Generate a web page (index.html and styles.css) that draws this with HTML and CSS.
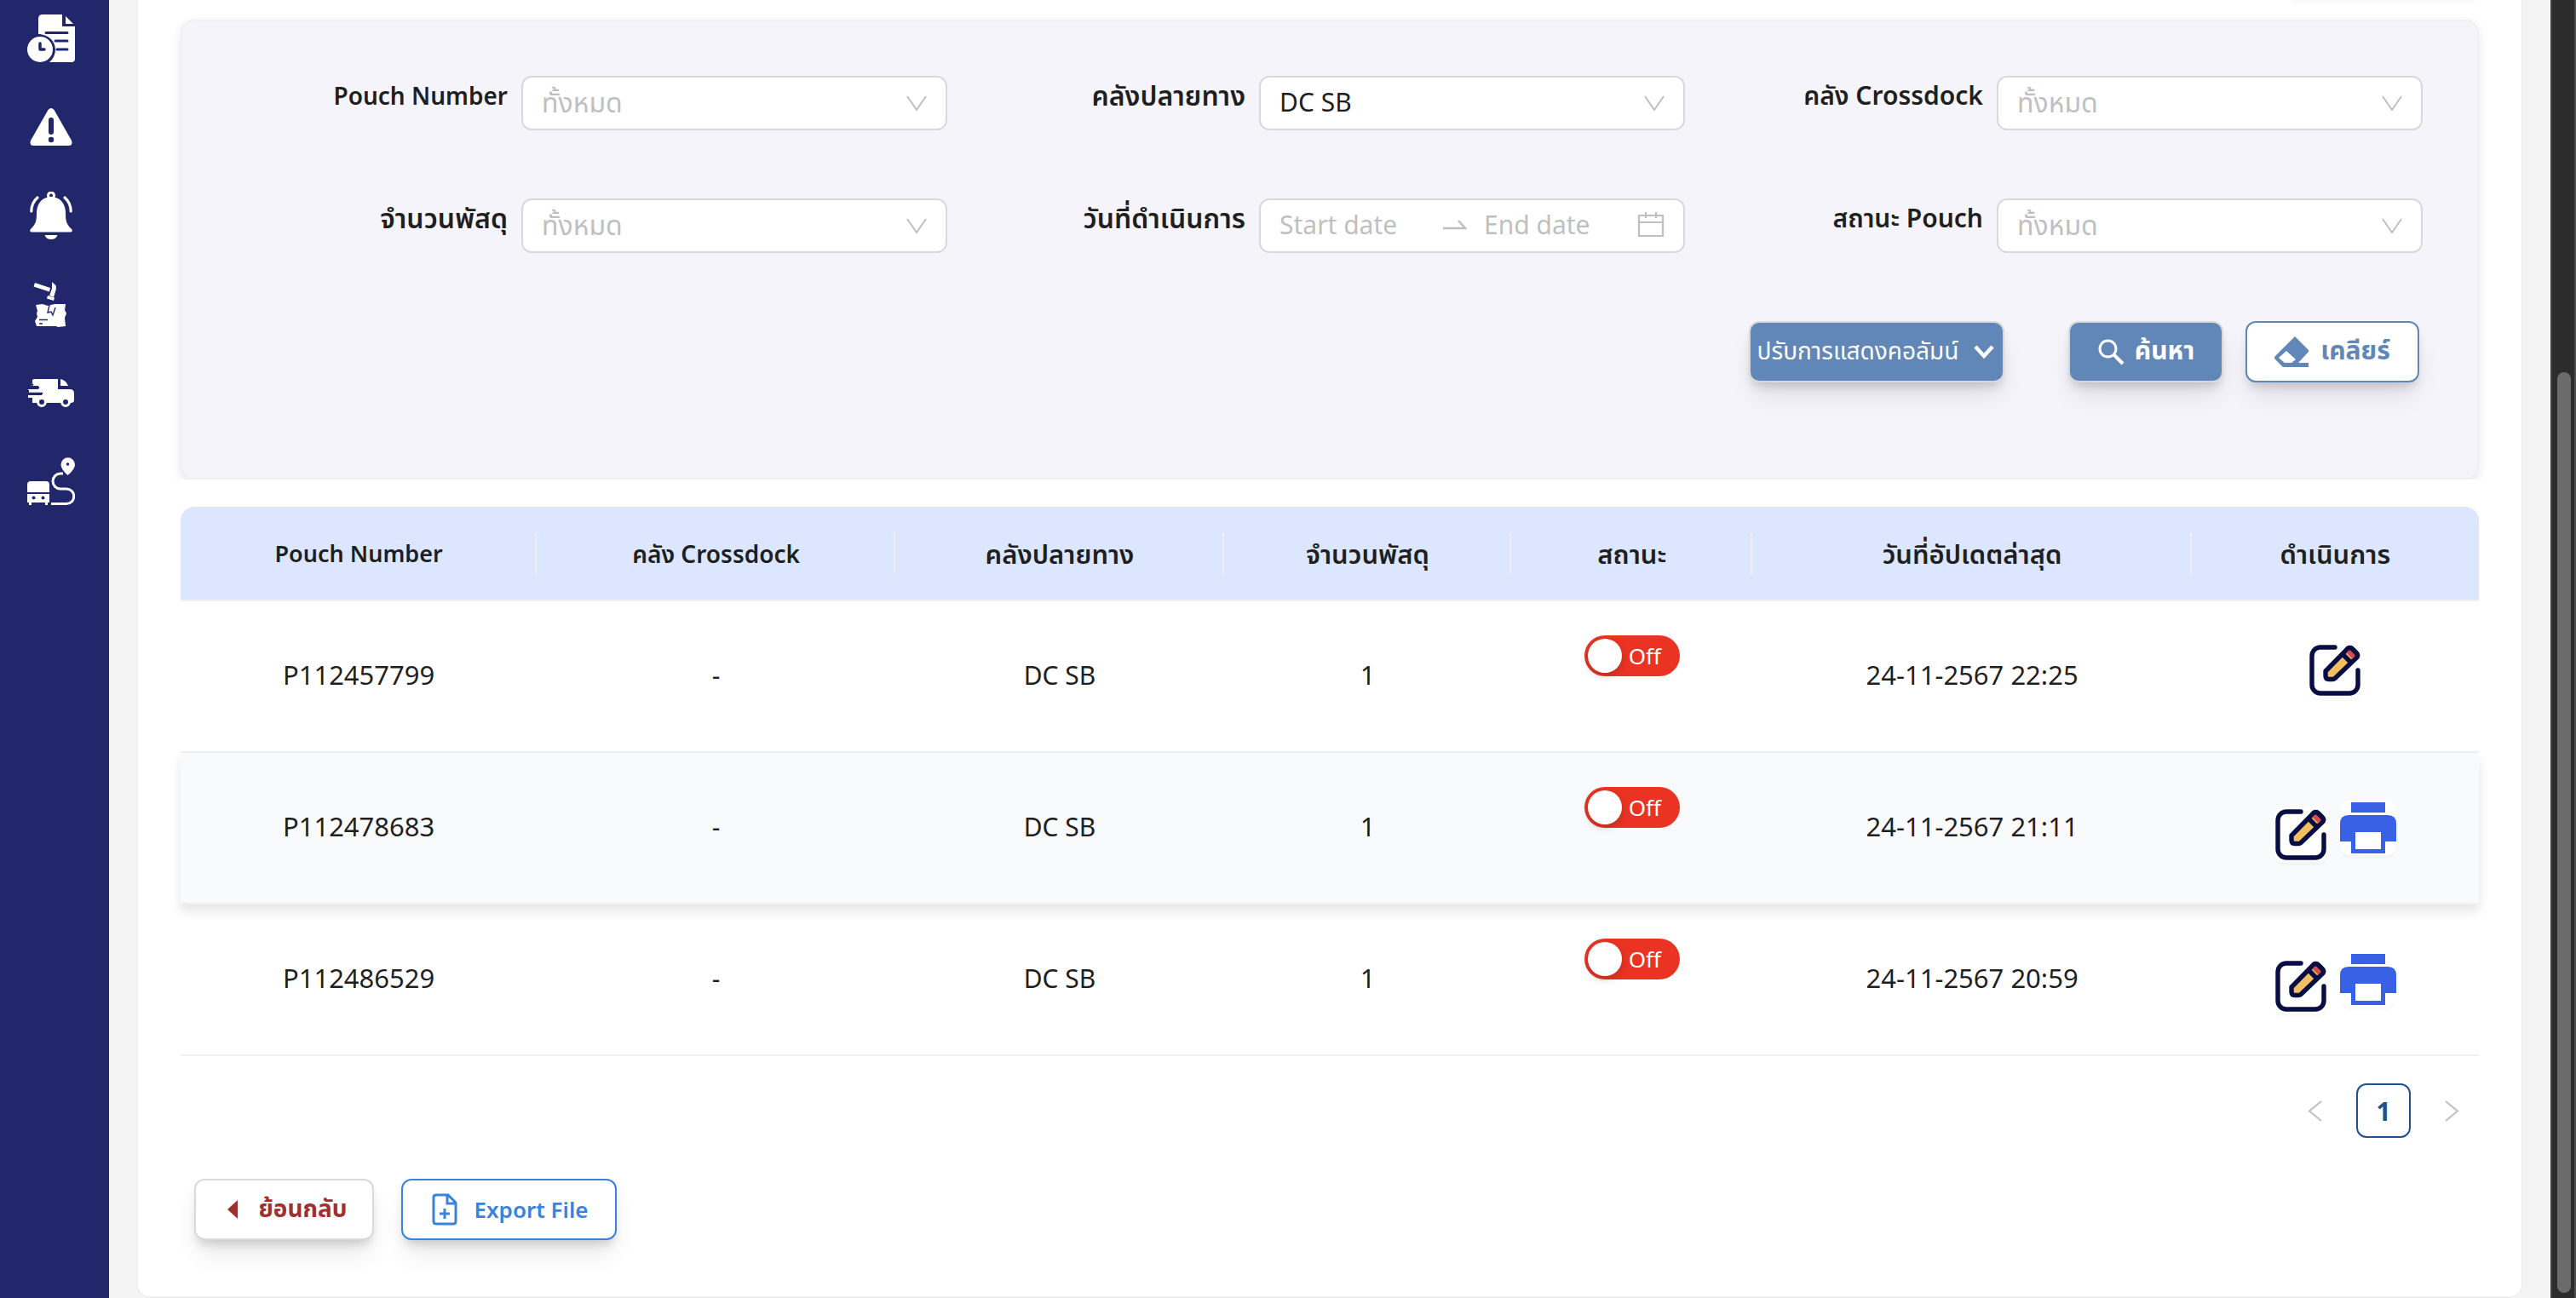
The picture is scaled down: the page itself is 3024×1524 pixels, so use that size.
FILE: index.html
```html
<!DOCTYPE html>
<html lang="th">
<head>
<meta charset="utf-8">
<title>Pouch</title>
<meta name="viewport" content="width=device-width, initial-scale=1">
<link rel="stylesheet" href="styles.css">
</head>
<body>
<svg class="sprite" aria-hidden="true">
  <symbol id="i-chevron" viewBox="0 0 28 28"><path d="M3 6L14 22L25 6" fill="none" stroke="currentColor" stroke-width="2"/></symbol>
  <symbol id="i-edit" viewBox="0 0 60 60">
    <path d="M30 3H13A10 10 0 0 0 3 13V47A10 10 0 0 0 13 57H47A10 10 0 0 0 57 47V30" fill="none" stroke="#080d43" stroke-width="5.4" stroke-linecap="round"/>
    <path d="M19 31L44.500 5Q47.500 2 50.500 5L55 9.500Q58 12.500 55 15.500L30 39.500Q29 40.500 27 40.500H23Q19 40.500 19 36.500Z" fill="#f1bf5f" stroke="#080d43" stroke-width="5.400" stroke-linejoin="round"/>
    <path d="M43.500 9.500L47.500 5.500L54.500 12.500L50.500 16.500Z" fill="#d84a4f"/>
    <path d="M39 11L49 21" stroke="#080d43" stroke-width="5.400"/>
    <path d="M44.500 5Q47.500 2 50.500 5L55 9.500Q58 12.500 55 15.500" fill="none" stroke="#080d43" stroke-width="5.400"/>
  </symbol>
  <symbol id="i-print" viewBox="0 0 66 64">
    <path d="M13 2H53V14H13ZM10 17H56Q66 17 66 27V48H53V62H13V48H0V27Q0 17 10 17Z" fill="#3861e6"/>
    <path d="M18 37H48V57H18Z" fill="#fff"/>
  </symbol>
</svg>
<div class="app">
  <nav class="sidebar" aria-label="Menu">
    <a class="nav-link" href="#history" aria-label="History"><svg viewBox="0 0 56 56">
      <path d="M18 0H41V14H56V52Q56 56 52 56H26Q33 50 33 41Q32 26 15 23H13V5Q13 0 18 0Z" fill="#fff"/>
      <path d="M45 2L54 11H45Z" fill="#fff"/>
      <path d="M22 21.500H47M33 31H47M35 41H47" stroke="#22276b" stroke-width="3" stroke-linecap="round"/>
      <circle cx="15" cy="41" r="15" fill="#fff"/><path d="M15 34V41H20" fill="none" stroke="#22276b" stroke-width="3.500" stroke-linecap="round" stroke-linejoin="round"/></svg></a>
    <a class="nav-link" href="#problems" aria-label="Problems"><svg viewBox="0 0 56 56">
      <path d="M24.500 8Q28 4 31.500 8L52 44Q54 49.500 49 50H7Q2 49.500 4 44Z" fill="#fff"/>
      <path d="M28 20V34" stroke="#22276b" stroke-width="6" stroke-linecap="round"/><circle cx="28" cy="43" r="3.200" fill="#22276b"/></svg></a>
    <a class="nav-link" href="#alerts" aria-label="Alerts"><svg viewBox="0 0 56 56">
      <circle cx="28" cy="4.500" r="3.500" fill="none" stroke="#fff" stroke-width="3"/>
      <path d="M28 6Q43 7 45 23C45 33 45 37 52 44Q54 47 51 47.500H5Q2 47 4 44C11 37 11 33 11 23Q13 7 28 6Z" fill="#fff"/>
      <path d="M20.500 51H35.500Q34 56 28 56T20.500 51Z" fill="#fff"/>
      <path d="M12 7Q5 13 4.800 23M44 7Q51 13 51.200 23" fill="none" stroke="#fff" stroke-width="3.200" stroke-linecap="round"/></svg></a>
    <a class="nav-link" href="#damaged" aria-label="Damaged parcels"><svg viewBox="0 0 56 56">
      <path d="M9 3L27 9L26 13.500L7.500 7.500Z" fill="#fff"/><path d="M29 2L33.500 6L34 10L31 20L26 18L29 10Z" fill="#fff"/><path d="M24 18L32 20.500L31 24L23 21.500Z" fill="#fff"/>
      <path d="M10 29L18 28L24 30L32 28H45L44 35L46 39L44 44L45 54L36 55L34 54H11L9 48L12 43L11 39L12 36Z" fill="#fff"/>
      <path d="M26 29L24 38L28 37L30 41L33 32" fill="none" stroke="#22276b" stroke-width="1.400"/><path d="M14 46.500H24M14 51H18" stroke="#22276b" stroke-width="1.400"/></svg></a>
    <a class="nav-link" href="#delivery" aria-label="Delivery"><svg viewBox="0 0 56 56">
      <path d="M8 12H36V24H50Q55 24 55 29V37Q55 40 51 40H6V34H1V31H17V28H2V25H1V24H13V20H4V17H6V14Q6 12 8 12Z" fill="#fff"/>
      <path d="M39 12Q45 13 48 20H39Z" fill="#fff"/><path d="M3 18.500H6M4 22H13M2 29H17" stroke="#22276b" stroke-width="2.500" stroke-linecap="round"/>
      <circle cx="17" cy="39" r="4.500" fill="#22276b" stroke="#fff" stroke-width="3"/><circle cx="45" cy="39" r="4.500" fill="#22276b" stroke="#fff" stroke-width="3"/></svg></a>
    <a class="nav-link" href="#routes" aria-label="Routes"><svg viewBox="0 0 56 56">
      <path d="M0 32Q0 28 4 28H22Q26 28 26 32V41H0ZM0 43H26V53H24V56H21V53H5V56H2V53H0Z" fill="#fff"/><circle cx="7.500" cy="47.500" r="2" fill="#22276b"/><circle cx="18.500" cy="47.500" r="2" fill="#22276b"/>
      <path d="M42 19H39A9 9 0 0 0 39 37H46A8.700 8.700 0 0 1 46 54.500H28" fill="none" stroke="#fff" stroke-width="3"/>
      <path d="M47.500 21Q39.500 14 39.500 8.500A8.200 8.200 0 0 1 56 8.500Q56 14 47.500 21Z" fill="#fff"/><circle cx="47.500" cy="8" r="1.800" fill="#22276b"/></svg></a>
  </nav>

  <main class="content">
    <section class="card">
      <div class="card-tools"></div>
      <form class="filters">
        <div class="field"><label for="pouch" class="is-latin">Pouch Number</label><div class="control"><select id="pouch" class="is-empty"><option>ทั้งหมด</option></select><svg class="chevron"><use href="#i-chevron"/></svg></div></div>
        <div class="field"><label for="dest" class="is-thai">คลังปลายทาง</label><div class="control"><select id="dest"><option>DC SB</option></select><svg class="chevron"><use href="#i-chevron"/></svg></div></div>
        <div class="field"><label for="cross">คลัง Crossdock</label><div class="control"><select id="cross" class="is-empty"><option>ทั้งหมด</option></select><svg class="chevron"><use href="#i-chevron"/></svg></div></div>
        <div class="field"><label for="count" class="is-thai">จำนวนพัสดุ</label><div class="control"><select id="count" class="is-empty"><option>ทั้งหมด</option></select><svg class="chevron"><use href="#i-chevron"/></svg></div></div>
        <div class="field"><label for="start" class="is-thai">วันที่ดำเนินการ</label>
          <div class="range"><input id="start" type="text" placeholder="Start date">
            <svg class="range-arrow" viewBox="0 0 28 28"><path d="M0 19H26L18 10" fill="none" stroke="currentColor" stroke-width="2.500"/></svg>
            <input type="text" placeholder="End date" aria-label="End date">
            <svg class="range-cal" viewBox="0 0 32 32"><path d="M2 6H30V30H2ZM2 14H30M10 2V9M22 2V9" fill="none" stroke="currentColor" stroke-width="2.200"/></svg></div></div>
        <div class="field"><label for="status">สถานะ Pouch</label><div class="control"><select id="status" class="is-empty"><option>ทั้งหมด</option></select><svg class="chevron"><use href="#i-chevron"/></svg></div></div>
        <div class="filter-actions">
          <button type="button" class="btn btn-columns">ปรับการแสดงคอลัมน์<svg viewBox="0 0 28 28"><path d="M4 8L14 19L24 8" fill="none" stroke="currentColor" stroke-width="4.500"/></svg></button>
          <button type="button" class="btn btn-search"><svg viewBox="0 0 32 32"><circle cx="12.500" cy="12.500" r="9.500" fill="none" stroke="currentColor" stroke-width="3"/><path d="M19 19L30 30" stroke="currentColor" stroke-width="4"/></svg>ค้นหา</button>
          <button type="button" class="btn btn-clear"><svg viewBox="0 0 40 40"><path fill-rule="evenodd" d="M24 2L40 18Q41 19 40 20L28 33H40V38H10L1 29Q-1 27 1 25ZM14 19L5 27L12 33H20L25 29Z" fill="currentColor"/></svg>เคลียร์</button>
        </div>
      </form>

      <div class="table-wrap">
        <table class="pouches">
          <colgroup><col class="c-code"><col class="c-cross"><col class="c-dest"><col class="c-count"><col class="c-status"><col class="c-date"><col class="c-action"></colgroup>
          <thead><tr><th scope="col" class="is-latin">Pouch Number</th><th scope="col">คลัง Crossdock</th><th scope="col" class="is-thai">คลังปลายทาง</th><th scope="col" class="is-thai">จำนวนพัสดุ</th><th scope="col" class="is-thai">สถานะ</th><th scope="col" class="is-thai">วันที่อัปเดตล่าสุด</th><th scope="col" class="is-thai">ดำเนินการ</th></tr></thead>
          <tbody>
            <tr><td class="num">P112457799</td><td>-</td><td>DC SB</td><td class="num">1</td>
              <td class="cell-switch"><button type="button" class="switch" role="switch" aria-checked="false">Off</button></td>
              <td class="num">24-11-2567 22:25</td>
              <td class="cell-actions is-single"><div class="actions"><button type="button" class="icon-btn" aria-label="Edit"><svg class="i-edit"><use href="#i-edit"/></svg></button></div></td></tr>
            <tr class="is-hover"><td class="num">P112478683</td><td>-</td><td>DC SB</td><td class="num">1</td>
              <td class="cell-switch"><button type="button" class="switch" role="switch" aria-checked="false">Off</button></td>
              <td class="num">24-11-2567 21:11</td>
              <td class="cell-actions"><div class="actions"><button type="button" class="icon-btn" aria-label="Edit"><svg class="i-edit"><use href="#i-edit"/></svg></button><button type="button" class="icon-btn icon-btn-print" aria-label="Print"><svg class="i-print"><use href="#i-print"/></svg></button></div></td></tr>
            <tr><td class="num">P112486529</td><td>-</td><td>DC SB</td><td class="num">1</td>
              <td class="cell-switch"><button type="button" class="switch" role="switch" aria-checked="false">Off</button></td>
              <td class="num">24-11-2567 20:59</td>
              <td class="cell-actions"><div class="actions"><button type="button" class="icon-btn" aria-label="Edit"><svg class="i-edit"><use href="#i-edit"/></svg></button><button type="button" class="icon-btn icon-btn-print" aria-label="Print"><svg class="i-print"><use href="#i-print"/></svg></button></div></td></tr>
          </tbody>
        </table>
        <nav class="pagination" aria-label="Pages">
          <button type="button" class="page" aria-label="Previous page"><svg viewBox="0 0 28 28"><path d="M21 3L7 14.500L21 26" fill="none" stroke="currentColor" stroke-width="2"/></svg></button>
          <button type="button" class="page is-current" aria-current="page">1</button>
          <button type="button" class="page" aria-label="Next page"><svg viewBox="0 0 28 28"><path d="M7 3L21 14.500L7 26" fill="none" stroke="currentColor" stroke-width="2"/></svg></button>
        </nav>
      </div>
      <div class="footer-actions">
        <button type="button" class="btn btn-back"><svg viewBox="0 0 16 24"><path d="M14 1L2 12L14 23Z" fill="currentColor"/></svg>ย้อนกลับ</button>
        <button type="button" class="btn btn-export"><svg viewBox="0 0 32 40"><path d="M5 3H20L29 12V34Q29 37 26 37H6Q3 37 3 34V6Q3 3 6 3M19 3V13H29M16 19V31M10 25H22" fill="none" stroke="currentColor" stroke-width="3"/></svg>Export File</button>
      </div>
    </section>
  </main>
  <div class="scrollbar" aria-hidden="true"><div class="scrollbar-thumb"></div></div>
</div>
</body>
</html>
```
FILE: styles.css
```css
* { box-sizing: border-box; }
body {
  margin: 0;
  background: #f4f4f4;
  color: #1f1f1f;
  font-family: "Noto Sans", "Noto Sans Thai", sans-serif;
  font-size: 30px;
}
button, input, select { font: inherit; color: inherit; margin: 0; }
svg { display: block; flex: none; }
.sprite { position: absolute; width: 0; height: 0; }

.app { display: flex; min-height: 100vh; }
.sidebar {
  flex: 0 0 128px;
  display: flex;
  flex-direction: column;
  gap: 48px;
  padding: 17px 32px;
  background: #22276b;
}
.nav-link { display: block; width: 56px; height: 56px; }
.nav-link svg { width: 56px; height: 56px; }

.content { flex: 1; min-width: 0; padding: 0 32px; }
.card {
  padding: 0 50px 66px;
  background: #fff;
  border: 2px solid #f0f0f0;
  border-top: 0;
  border-radius: 0 0 16px 16px;
}
.card-tools {
  width: 216px;
  height: 4px;
  margin: 0 4px 19px auto;
  background: #fafafa;
  border-radius: 0 0 8px 8px;
}

.filters {
  display: grid;
  grid-template-columns: repeat(3, 1fr);
  row-gap: 80px;
  padding: 64px 64px 112px 32px;
  background: #f5f4fa;
  border: 2px solid #f0f0f0;
  border-radius: 16px;
  box-shadow: 0 4px 12px rgba(0, 0, 0, .1);
}
.field { display: grid; grid-template-columns: 7fr 10fr; column-gap: 16px; }
.field label { text-align: right; font-weight: 600; line-height: 46px; white-space: nowrap; }
.field .is-latin { font-size: 28px; }
.field .is-thai { font-size: 32px; }
.control { display: grid; align-items: center; }
.control select, .control .chevron { grid-area: 1 / 1; }
.control select, .range {
  width: 100%;
  height: 64px;
  padding: 0 22px 4px;
  background: #fff;
  border: 2px solid #d9d9d9;
  border-radius: 12px;
}
.control select { appearance: none; }
.control .is-empty { color: #bfbfbf; font-size: 32px; }
.chevron { justify-self: end; width: 28px; height: 28px; margin-right: 22px; color: #bfbfbf; pointer-events: none; }
.range { display: flex; align-items: center; color: #bfbfbf; }
.range input { flex: 1; min-width: 0; width: 0; padding: 0; border: 0; background: none; outline: 0; }
.range input::placeholder { color: #bfbfbf; opacity: 1; }
.range-arrow { width: 28px; height: 28px; margin: 0 20px 0 28px; }
.range-cal { width: 32px; height: 32px; margin-left: 16px; }

.btn {
  display: flex;
  align-items: center;
  justify-content: center;
  height: 72px;
  padding: 0;
  background: #fff;
  border: 2px solid #d9d9d9;
  border-radius: 12px;
  font-weight: 700;
  white-space: nowrap;
  box-shadow: 0 20px 30px -6px rgba(0, 0, 0, .1), 0 8px 12px -4px rgba(0, 0, 0, .16);
}
.filter-actions { grid-column: 1 / -1; display: flex; justify-content: flex-end; padding-right: 4px; }
.btn-columns { width: 300px; margin-right: 75px; gap: 16px; background: #6187b8; color: #fff; font-size: 28px; font-weight: 400; }
.btn-columns svg { width: 28px; height: 28px; }
.btn-search { width: 182px; margin-right: 26px; gap: 12px; background: #6187b8; color: #fff; }
.btn-search svg { width: 32px; height: 32px; }
.btn-clear { width: 204px; gap: 14px; border-color: #6187b8; color: #6187b8; }
.btn-clear svg { width: 40px; height: 40px; }

.table-wrap { position: relative; padding-top: 32px; background: #fff; }
.pouches { width: 100%; table-layout: fixed; border-collapse: separate; border-spacing: 0; text-align: center; }
.c-code { width: 15.5%; }
.c-cross { width: 15.6%; }
.c-dest { width: 14.3%; }
.c-count { width: 12.5%; }
.c-status { width: 10.5%; }
.c-date { width: 19.1%; }
.c-action { width: 12.5%; }
.pouches th {
  height: 111px;
  padding: 0;
  background: linear-gradient(#f0f0f0, #f0f0f0) right center / 2px 48px no-repeat #dce6fe;
  border-bottom: 2px solid #f0f0f0;
  font-size: 28px;
  font-weight: 600;
  line-height: 40px;
}
.pouches .is-latin { font-size: 27px; }
.pouches .is-thai { font-size: 31px; }
.pouches th:first-child { border-top-left-radius: 16px; }
.pouches th:last-child { border-top-right-radius: 16px; background: #dce6fe; }
.pouches td { height: 178px; padding: 0 0 4px; border-bottom: 2px solid #f0f0f0; }
.pouches .num { font-size: 31px; }
.is-hover { position: relative; background: #f9fafc; box-shadow: 0 8px 12px rgba(0, 0, 0, .1); }
.pouches .cell-switch { padding-top: 40px; vertical-align: top; }
.switch {
  display: flex;
  align-items: center;
  gap: 8px;
  width: 112px;
  height: 48px;
  margin: 0 auto;
  padding: 0 4px;
  border: 0;
  border-radius: 24px;
  background: #ea3323;
  color: #fff;
  font-size: 26px;
  line-height: 40px;
}
.switch::before { content: ""; width: 40px; height: 40px; border-radius: 50%; background: #fff; box-shadow: 0 4px 8px rgba(0, 35, 11, .2); }
.pouches .cell-actions { padding-top: 56px; vertical-align: top; }
.pouches .is-single { padding-top: 49px; }
.actions { display: flex; align-items: flex-end; justify-content: center; gap: 14px; }
.icon-btn { display: block; padding: 0; border: 0; background: none; }
.icon-btn svg { background: #fff; border-radius: 12px; box-shadow: 0 4px 0 rgba(0, 0, 0, .02); }
.icon-btn-print { padding-bottom: 8px; }
.i-edit { width: 64px; height: 64px; padding: 2px; }
.i-print { width: 66px; height: 64px; }

.pagination { display: flex; justify-content: flex-end; gap: 16px; padding-top: 32px; }
.page { display: grid; place-items: center; width: 64px; height: 64px; padding: 0; border: 0; background: none; color: #bfbfbf; }
.page svg { width: 28px; height: 28px; }
.is-current { border: 2px solid #20518f; border-radius: 12px; color: #20518f; font-weight: 700; }

.footer-actions { display: flex; gap: 32px; padding: 48px 16px 0; }
.btn-back { width: 211px; gap: 22px; padding-left: 6px; color: #9e3030; font-size: 28px; font-weight: 700; }
.btn-back svg { width: 16px; height: 24px; }
.btn-export { width: 253px; gap: 18px; border-color: #3b82dc; color: #3b82dc; font-size: 26px; font-weight: 600; }
.btn-export svg { width: 34px; height: 40px; }

.scrollbar {
  flex: 0 0 30px;
  display: flex;
  flex-direction: column;
  justify-content: flex-end;
  padding: 0 4px 6px 6px;
  background: #2c2c2c;
  border-left: 2px solid #3e3e3e;
  border-right: 2px solid #4f4f4f;
}
.scrollbar-thumb { height: 71.2%; border-radius: 8px; background: #6b6b6b; }
```
